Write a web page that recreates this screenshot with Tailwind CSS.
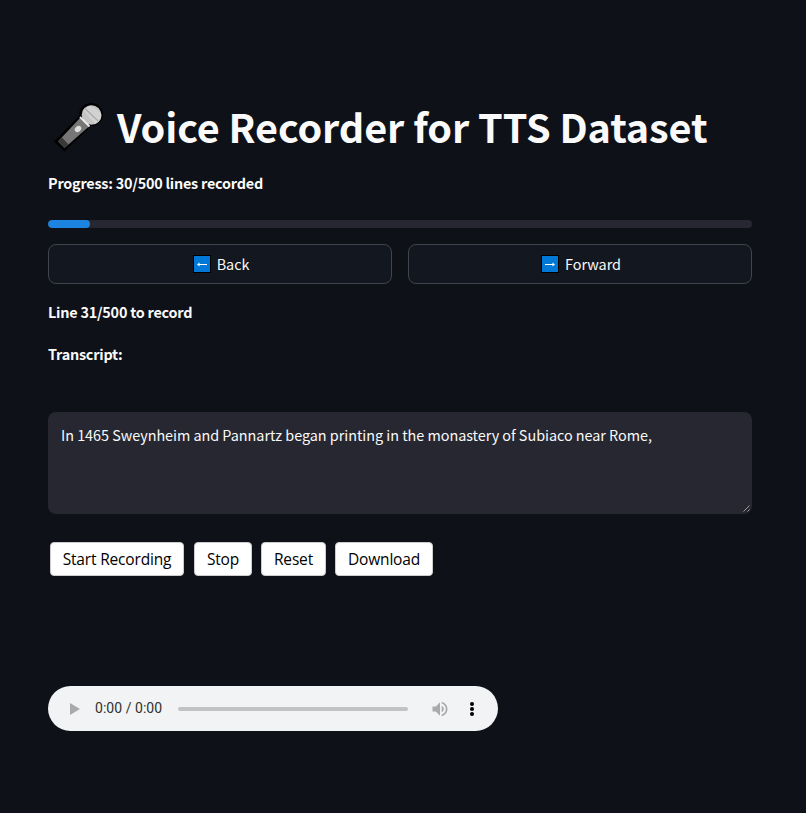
<!DOCTYPE html>
<html lang="en">
<head>
<meta charset="utf-8">
<title>Voice Recorder for TTS Dataset</title>
<script src="https://cdn.jsdelivr.net/npm/@tailwindcss/browser@4"></script>
</head>
<body class="bg-[#0e1117] text-[#fafafa] w-[806px] h-[813px] overflow-hidden font-['Noto_Sans_CJK_SC','Noto_Sans',sans-serif] text-[14.4px]">
<main class="flex flex-col pl-12 pt-[99px] w-[752px]">
  <h1 class="flex items-center h-[54px] text-[39.6px] font-bold whitespace-nowrap tracking-[-0.1px]">
    <svg class="w-[60px] h-[60px] mt-[4px] ml-0.5 mr-[7px] shrink-0" viewBox="0 0 60 60">
      <path d="M4 43.500 L29 18 C28.500 10 35 4.500 42 5 C49 5.500 53.500 11 53 17.500 C52.500 24 46 28.500 41 28 L14.500 53.500 Z" fill="#000"/>
      <path d="M8 43.500 L30 20 L39 28.500 L14.500 50 Z" fill="#767676"/>
      <path d="M8 43.500 L12 39.500 L18.500 46.500 L14.500 50 Z" fill="#383838"/>
      <circle cx="41.500" cy="17" r="9.800" fill="#c5c5c5"/>
      <path d="M33 12 L45 26 C51 23 52 19 51 15 L40 7.500 Z" fill="#d2d2d2"/>
      <path d="M35 10.500 L48 23" stroke="#aaa" stroke-width="1.200"/>
      <path d="M30 19 L39.500 28.500" stroke="#eee" stroke-width="1.800"/>
      <ellipse cx="28" cy="31" rx="3.600" ry="2.700" transform="rotate(-45 28 31)" fill="#ddd"/>
    </svg>
    <span>Voice Recorder for TTS Dataset</span>
  </h1>
  <p class="mt-[18px] h-6 leading-6 font-bold tracking-[-0.22px]"><span>Progress: 30/500 lines recorded</span></p>
  <div class="mt-[25px] h-2 rounded-full bg-[#262730] overflow-hidden"><div class="h-2 rounded-full bg-[#1c83e1]" style="width:6%"></div></div>
  <div class="mt-4 grid grid-cols-2 gap-4">
    <button class="h-10 pl-[2px] rounded-lg border border-[#41444c] bg-[#13171f] flex items-center justify-center gap-[6px] tracking-[-0.05px]">
      <svg class="w-[18px] h-[18px]" viewBox="0 0 18 18"><path d="M0 0H18V18H0Z" fill="#000"/><path d="M1 1H17V17H1Z" fill="#0078d7"/><path d="M5.500 9.500H14" stroke="#fff"/><path d="M4 9.500L6.500 7.500V11.500Z" fill="#fff"/></svg>
      <span>Back</span>
    </button>
    <button class="h-10 pl-[2px] rounded-lg border border-[#41444c] bg-[#13171f] flex items-center justify-center gap-[6px] tracking-[-0.05px]">
      <svg class="w-[18px] h-[18px]" viewBox="0 0 18 18"><path d="M0 0H18V18H0Z" fill="#000"/><path d="M1 1H17V17H1Z" fill="#0078d7"/><path d="M4 9.500H12.500" stroke="#fff"/><path d="M14 9.500L11.500 7.500V11.500Z" fill="#fff"/></svg>
      <span>Forward</span>
    </button>
  </div>
  <p class="mt-[16px] h-6 leading-6 font-bold tracking-[-0.22px]"><span>Line 31/500 to record</span></p>
  <p class="mt-[18px] h-6 leading-6 font-bold tracking-[-0.22px]"><span>Transcript:</span></p>
  <div class="relative mt-[46px] h-[102px] rounded-lg bg-[#262730] pl-[13px] pt-[11px] leading-6 tracking-[-0.03px]">
    <span>In 1465 Sweynheim and Pannartz began printing in the monastery of Subiaco near Rome,</span>
    <svg class="absolute right-[2px] bottom-[2px] w-[7px] h-[7px]" viewBox="0 0 7 7"><path d="M.5 6.500L6.500 .5M4.500 6.500L6.500 4.500" stroke="#aaa" stroke-width=".9"/></svg>
  </div>
  <div class="mt-7 ml-[2px] flex text-black text-[15.5px] tracking-[-0.17px] font-['Open_Sans',sans-serif]">
    <button class="w-[134px] h-[34px] pt-[2px] rounded-[4px] border border-[#ccc] bg-white whitespace-nowrap"><span>Start Recording</span></button>
    <button class="ml-[10px] w-[58px] h-[34px] pt-[2px] rounded-[4px] border border-[#ccc] bg-white"><span>Stop</span></button>
    <button class="ml-[9px] w-[65px] h-[34px] pt-[2px] rounded-[4px] border border-[#ccc] bg-white"><span>Reset</span></button>
    <button class="ml-[9px] w-[98px] h-[34px] pt-[2px] rounded-[4px] border border-[#ccc] bg-white"><span>Download</span></button>
  </div>
  <div class="mt-[110px] w-[450px] h-[45px] rounded-full bg-[#f1f3f4] flex items-center font-[Roboto,sans-serif] text-[14px] text-[#303030]">
    <svg class="ml-[22px] w-[10px] h-[12px]" viewBox="0 0 10 12"><path d="M0 0L10 6L0 12Z" fill="#a9aaab"/></svg>
    <span class="ml-[15px] w-[83px] whitespace-nowrap tracking-[0.04px]">0:00 / 0:00</span>
    <div class="w-[230px] h-1 rounded-full bg-[#c1c2c3]"></div>
    <svg class="ml-[22px] w-[20px] h-[20px]" viewBox="0 0 24 24" fill="#a9aaab"><path d="M3 9v6h4l5 5V4L7 9H3zm13.500 3c0-1.770-1.020-3.290-2.500-4.030v8.050c1.480-.73 2.500-2.250 2.500-4.020zM14 3.230v2.060c2.890.86 5 3.540 5 6.710s-2.110 5.850-5 6.710v2.060c4.010-.91 7-4.490 7-8.770s-2.990-7.860-7-8.770z"/></svg>
    <svg class="ml-[19px] w-[6px] h-[16px]" viewBox="0 0 6 16"><circle cx="3" cy="3" r="2"/><circle cx="3" cy="8" r="2"/><circle cx="3" cy="13" r="2"/></svg>
  </div>
</main>
</body>
</html>
